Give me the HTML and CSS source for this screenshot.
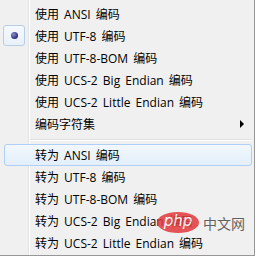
FILE: index.html
```html
<!DOCTYPE html>
<html>
<head>
<meta charset="utf-8">
<link rel="stylesheet" href="styles.css">
</head>
<body>
<div class="menu">
  <div class="item">使用 ANSI 编码</div>
  <div class="item"><span class="check"><span class="dot"></span></span>使用 UTF-8 编码</div>
  <div class="item">使用 UTF-8-BOM 编码</div>
  <div class="item">使用 UCS-2 Big Endian 编码</div>
  <div class="item">使用 UCS-2 Little Endian 编码</div>
  <div class="item">编码字符集<span class="arrow"></span></div>
  <div class="sep"></div>
  <div class="item hover">转为 ANSI 编码</div>
  <div class="item">转为 UTF-8 编码</div>
  <div class="item">转为 UTF-8-BOM 编码</div>
  <div class="item">转为 UCS-2 Big Endian 编码</div>
  <div class="item">转为 UCS-2 Little Endian 编码</div>
  <div class="mark"><span class="php">php</span><span class="cn">中文网</span></div>
</div>
</body>
</html>
```
FILE: styles.css
```css
html, body {
  margin: 0;
  padding: 0;
  background: #ffffff;
}
.menu {
  position: relative;
  width: 255px;
  height: 256px;
  box-sizing: border-box;
  padding-top: 3px;
  background-color: #f0f0f0;
  background-image: linear-gradient(to right, transparent 28px, #e2e3e3 28px, #e2e3e3 29px, #ffffff 29px, #ffffff 30px, transparent 30px);
  border-right: 1px solid #979797;
  border-bottom: 1px solid #979797;
  font-family: "Open Sans", "Noto Sans CJK SC", sans-serif;
  font-size: 12px;
  word-spacing: 2px;
  color: #000;
  overflow: hidden;
}
.item {
  position: relative;
  height: 22px;
  box-sizing: border-box;
  margin: 0 2px 0 4px;
  padding-left: 30px;
  border: 1px solid transparent;
  border-radius: 3px;
  display: flex;
  align-items: center;
  white-space: pre;
}
.item.hover {
  border-color: #aecff7;
  background: linear-gradient(to bottom, #f2f8fd, #e3eef9);
}
.check {
  position: absolute;
  left: -2px;
  top: -1px;
  width: 20px;
  height: 19px;
  border: 1px solid #b6cde6;
  border-radius: 3px;
  background: linear-gradient(to bottom, #f6f9fd, #e8f0fa);
  display: flex;
  align-items: center;
  justify-content: center;
}
.dot {
  width: 7px;
  height: 7px;
  border-radius: 50%;
  background: radial-gradient(circle at 35% 35%, #8a8ad0, #2c2c78 70%);
}
.arrow {
  position: absolute;
  right: 7px;
  top: 6px;
  width: 0;
  height: 0;
  border-left: 4px solid #000;
  border-top: 4px solid transparent;
  border-bottom: 4px solid transparent;
}
.sep {
  height: 9px;
  margin: 0 2px 0 30px;
  background: linear-gradient(to bottom, transparent 4px, #e0e0e0 4px, #e0e0e0 5px, #ffffff 5px, #ffffff 6px, transparent 6px);
}
.mark {
  position: absolute;
  left: 157px;
  top: 212px;
  display: flex;
  align-items: center;
  gap: 4px;
  opacity: 0.85;
  word-spacing: 0;
}
.php {
  width: 42px;
  height: 21px;
  border-radius: 50%;
  background: #e2383a;
  color: #fff;
  font-family: "DejaVu Sans", sans-serif;
  font-style: italic;
  font-size: 15px;
  line-height: 19px;
  text-align: center;
}
.cn {
  font-family: "Noto Sans CJK SC", sans-serif;
  font-size: 14px;
  color: #4a4a4a;
}
```
